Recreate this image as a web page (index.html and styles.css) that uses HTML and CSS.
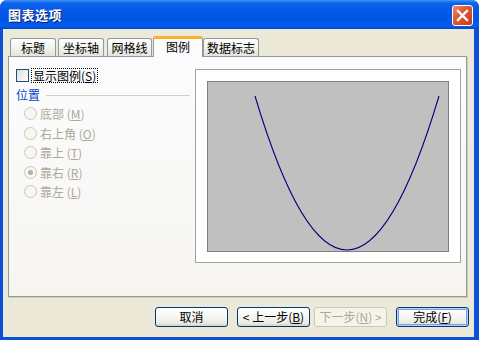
FILE: index.html
```html
<!DOCTYPE html>
<html>
<head>
<meta charset="utf-8">
<link rel="stylesheet" href="styles.css">
</head>
<body>
<div class="window">
  <div class="titlebar">
    <span class="title">图表选项</span>
    <span class="close"><svg width="13" height="13" viewBox="0 0 13 13"><path d="M2 2 L11 11 M11 2 L2 11" stroke="#fff" stroke-width="2.4" stroke-linecap="square"/></svg></span>
  </div>
  <div class="client">
    <div class="tabs">
      <div class="tab t1">标题</div>
      <div class="tab t2">坐标轴</div>
      <div class="tab t3">网格线</div>
      <div class="tab sel">图例</div>
      <div class="tab t5">数据标志</div>
    </div>
    <div class="panel">
      <div class="leftcol">
        <div class="check-row">
          <span class="checkbox"></span>
          <span class="focus">显示图例(<u>S</u>)</span>
        </div>
        <div class="group">
          <span class="group-label">位置</span>
          <span class="group-line"></span>
        </div>
        <div class="radios">
          <div class="radio-row"><span class="radio"></span><span class="rlabel">底部 (<u>M</u>)</span></div>
          <div class="radio-row"><span class="radio"></span><span class="rlabel">右上角 (<u>O</u>)</span></div>
          <div class="radio-row"><span class="radio"></span><span class="rlabel">靠上 (<u>T</u>)</span></div>
          <div class="radio-row"><span class="radio on"></span><span class="rlabel">靠右 (<u>R</u>)</span></div>
          <div class="radio-row"><span class="radio"></span><span class="rlabel">靠左 (<u>L</u>)</span></div>
        </div>
      </div>
      <div class="preview">
        <div class="plot">
          <svg width="242" height="171" viewBox="0 0 242 171"><path d="M48 15 Q140 323 232 15" fill="none" stroke="#000080" stroke-width="1.1"/></svg>
        </div>
      </div>
    </div>
    <div class="buttons">
      <div class="btn b1">取消</div>
      <div class="btn b2">&lt; 上一步(<u>B</u>)</div>
      <div class="btn b3 disabled">下一步(<u>N</u>) &gt;</div>
      <div class="btn b4 default">完成(<u>F</u>)</div>
    </div>
  </div>
</div>
</body>
</html>
```

FILE: styles.css
```css
html, body {
  margin: 0;
  padding: 0;
  background: #ffffff;
}
body {
  width: 479px;
  height: 340px;
  overflow: hidden;
  font-family: "Noto Sans CJK SC", "DejaVu Sans", sans-serif;
  font-size: 12px;
  color: #000;
}
.window {
  width: 479px;
  height: 340px;
  box-sizing: border-box;
  background: #0a50d8;
  border-radius: 7px 7px 0 0;
  display: flex;
  flex-direction: column;
  overflow: hidden;
}
.titlebar {
  height: 29px;
  flex: none;
  display: flex;
  align-items: center;
  justify-content: space-between;
  padding: 0 6px 0 8px;
  background: linear-gradient(to bottom, #3f94f8 0px, #0d63ea 3px, #0556e6 12px, #0055e5 20px, #045ef0 26px, #0046c8 29px);
}
.title {
  color: #ffffff;
  font-weight: bold;
  font-size: 13px;
  letter-spacing: 0.5px;
  text-shadow: 1px 1px 0 #0a1e6e;
  line-height: 16px;
  margin-top: 1px;
}
.close {
  width: 19px;
  height: 19px;
  border: 1px solid #ffffff;
  border-radius: 3px;
  background: linear-gradient(135deg, #f08a6a 0%, #e15a34 40%, #c9381a 100%);
  display: flex;
  align-items: center;
  justify-content: center;
  margin-top: 1px;
}
.client {
  flex: 1;
  margin: 0 5px 3px 3px;
  background: #ece9d8;
  display: flex;
  flex-direction: column;
  padding: 7px 7px 0 5px;
}
.tabs {
  display: flex;
  align-items: flex-end;
  height: 20px;
  padding-left: 2px;
}
.tab {
  height: 18px;
  box-sizing: border-box;
  border: 1px solid #919b9c;
  border-bottom: none;
  border-radius: 3px 3px 0 0;
  background: linear-gradient(to bottom, #ffffff 0%, #f3f3ef 50%, #e4e3dc 100%);
  display: flex;
  align-items: center;
  justify-content: center;
  line-height: 14px;
  font-size: 12px;
}
.t1 { width: 46px; margin-right: 2px; }
.t2 { width: 46px; margin-right: 3px; }
.t3 { width: 45px; margin-right: 1px; }
.sel {
  width: 50px;
  height: 21px;
  margin-bottom: -1px;
  background: #fcfcfe;
  border-top: 3px solid #f7b12d;
  position: relative;
  z-index: 1;
  padding-bottom: 2px;
}
.t5 { width: 56px; }
.panel {
  height: 241px;
  box-sizing: border-box;
  border: 1px solid #919b9c;
  border-right-color: #8f9a9b;
  box-shadow: 1px 1px 0 #d0cdbd;
  background: linear-gradient(to bottom, #fcfcfe 0%, #f6f5f0 100%);
  display: flex;
  padding: 12px 5px 0 7px;
}
.leftcol {
  width: 174px;
  display: flex;
  flex-direction: column;
}
.check-row {
  display: flex;
  align-items: center;
  height: 13px;
}
.checkbox {
  width: 13px;
  height: 13px;
  box-sizing: border-box;
  border: 1px solid #1c5180;
  background: linear-gradient(135deg, #dcdcd7 0%, #f2f2ef 60%, #ffffff 100%);
  margin-right: 2px;
}
.focus {
  border: 1px dotted #000;
  padding: 0 1px;
  line-height: 13px;
}
.group {
  display: flex;
  align-items: center;
  margin-top: 6px;
  height: 14px;
}
.group-label {
  color: #0046d5;
  line-height: 14px;
}
.group-line {
  flex: 1;
  height: 1px;
  background: #d0d0bf;
  margin-left: 6px;
}
.radios {
  display: flex;
  flex-direction: column;
  margin-top: 5px;
  padding-left: 8px;
  gap: 6.5px;
}
.radio-row {
  display: flex;
  align-items: center;
  height: 13px;
}
.radio {
  width: 13px;
  height: 13px;
  box-sizing: border-box;
  border: 1px solid #cac8bb;
  border-radius: 50%;
  background: #f7f6f1;
  margin-right: 3px;
  display: flex;
  align-items: center;
  justify-content: center;
}
.radio.on::after {
  content: "";
  width: 5px;
  height: 5px;
  border-radius: 50%;
  background: #b4b2a6;
}
.rlabel {
  color: #aca899;
  line-height: 13px;
}
.preview {
  width: 266px;
  height: 194px;
  box-sizing: border-box;
  margin-left: auto;
  border: 1px solid #a0a0a0;
  background: #ffffff;
  padding: 11px;
}
.plot {
  width: 242px;
  height: 171px;
  box-sizing: border-box;
  background: #c0c0c0;
  border: 1px solid #808080;
  overflow: hidden;
}
.plot svg {
  display: block;
  margin: -1px 0 0 -1px;
}
.buttons {
  display: flex;
  justify-content: flex-end;
  margin-top: 10px;
  margin-right: -2px;
}
.btn {
  width: 73px;
  height: 20px;
  box-sizing: border-box;
  border: 1px solid #003c74;
  border-radius: 3px;
  background: linear-gradient(to bottom, #ffffff 0%, #f6f6f2 50%, #eae9e3 85%, #d6d0c5 100%);
  display: flex;
  align-items: center;
  justify-content: center;
  line-height: 14px;
  font-size: 12px;
}
.b1 { margin-right: 9px; }
.b2 { margin-right: 4px; }
.b3 { margin-right: 9px; }
.disabled {
  border-color: #c9c7ba;
  background: #f5f4ea;
  color: #aca899;
}
.default {
  box-shadow: inset 0 0 0 1px #b8d0f5, inset 0 0 0 2px #7d9ee8;
}
u {
  text-decoration: underline;
  text-underline-offset: 1px;
}
```
